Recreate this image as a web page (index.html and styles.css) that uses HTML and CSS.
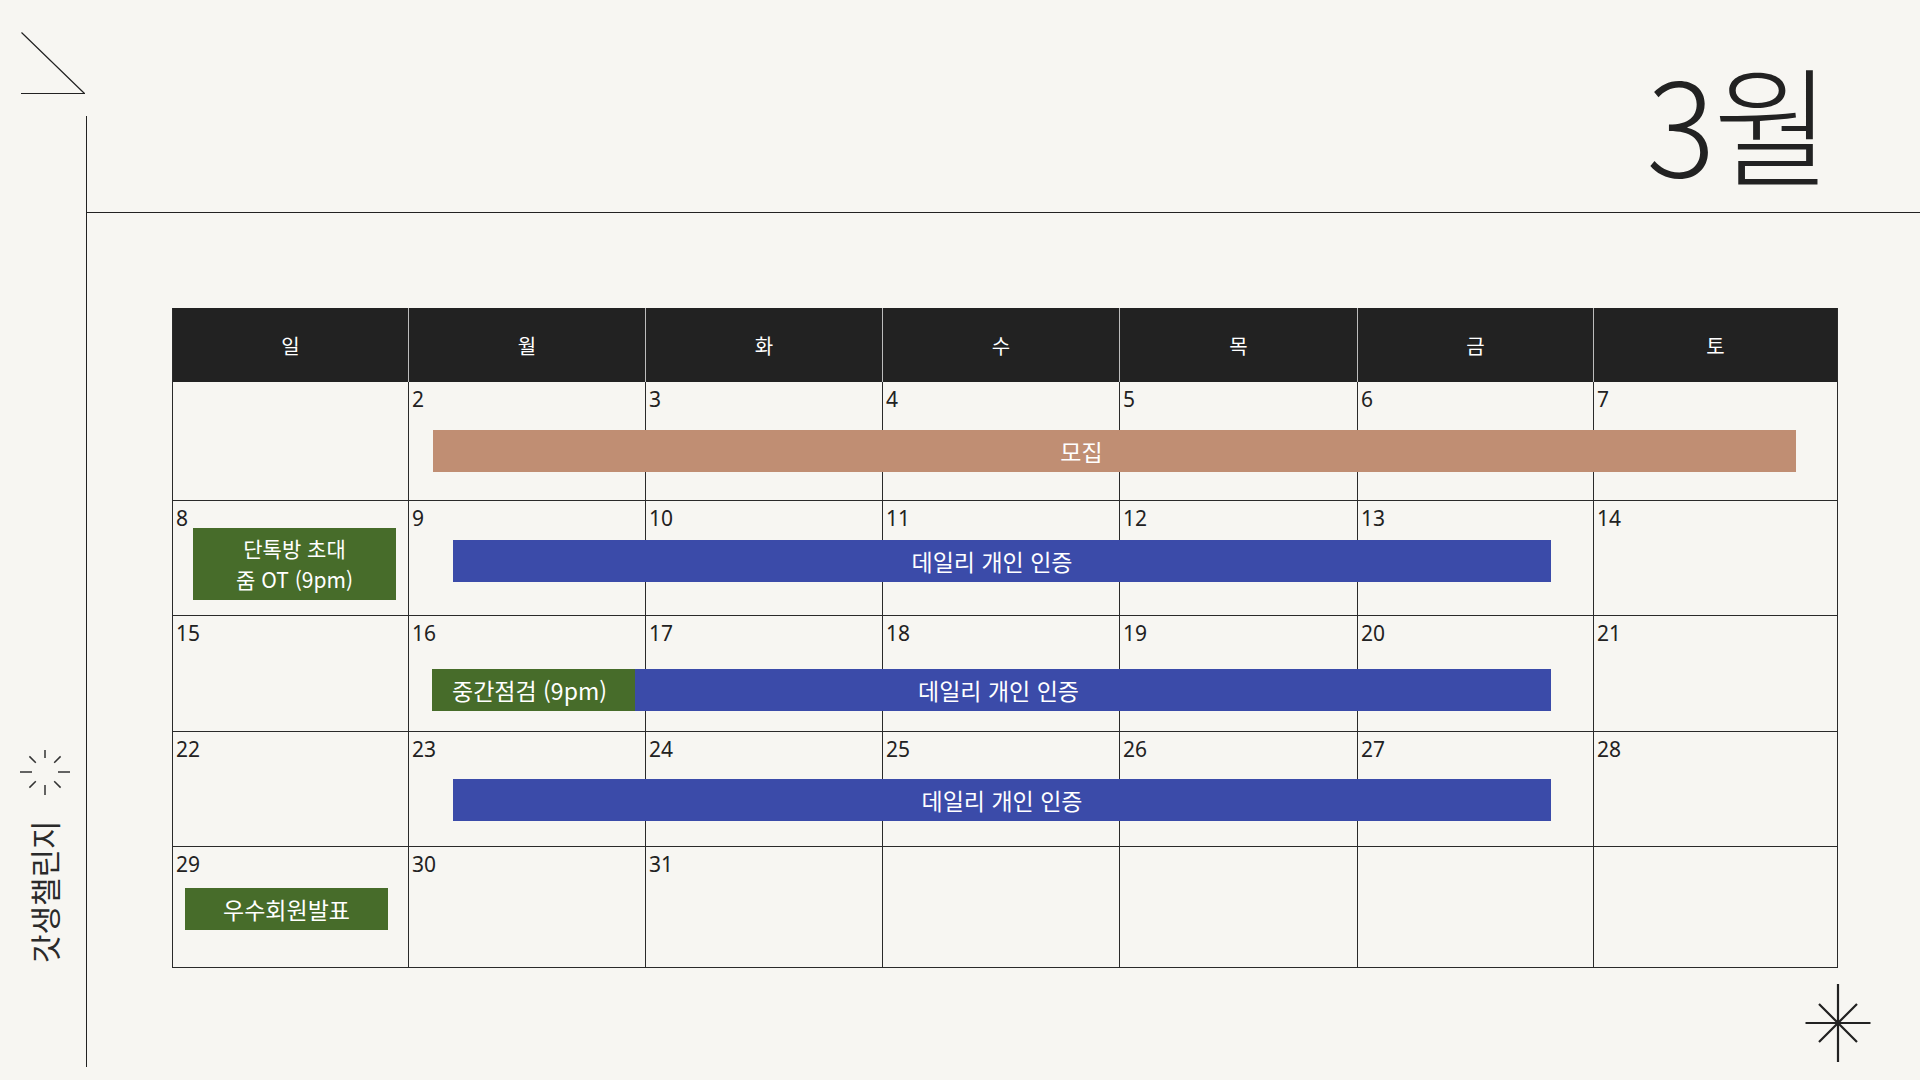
FILE: index.html
```html
<!DOCTYPE html>
<html lang="ko">
<head>
<meta charset="utf-8">
<title>3월 갓생챌린지</title>
<link rel="stylesheet" href="styles.css">
</head>
<body>
<div class="page">
  <aside class="rail">
    <div class="rail-deco">
      <svg class="corner" width="65" height="63" viewBox="0 0 65 63" aria-hidden="true">
        <path d="M0.5 0.5 L63.5 61.5 M0 61.5 H64" stroke="#222" stroke-width="1.2" fill="none"/>
      </svg>
      <svg class="sparkle" width="52" height="52" viewBox="0 0 52 52" aria-hidden="true">
        <g stroke="#333" stroke-width="1.5" stroke-linecap="butt">
          <path d="M26 4V12M26 39V49M1 26H13M39 26H51M10.4 10.4L16.8 16.8M41.6 10.4L35.2 16.8M10.4 41.6L16.8 35.2M35.2 35.2L41.6 41.6"/>
        </g>
      </svg>
      <div class="rail-title">갓생챌린지</div>
    </div>
    <div class="vline"></div>
  </aside>
  <main class="content">
    <header class="title-bar">
      <h1 class="month">3월</h1>
    </header>
    <section class="cal-wrap">
      <div class="calendar">
        <div class="cal-head">
          <div class="dow">일</div>
          <div class="dow">월</div>
          <div class="dow">화</div>
          <div class="dow">수</div>
          <div class="dow">목</div>
          <div class="dow">금</div>
          <div class="dow">토</div>
        </div>
        <div class="week w1">
          <div class="day c1"></div>
          <div class="day c2">2</div>
          <div class="day c3">3</div>
          <div class="day c4">4</div>
          <div class="day c5">5</div>
          <div class="day c6">6</div>
          <div class="day c7">7</div>
          <div class="event tan recruit">모집</div>
        </div>
        <div class="week w2">
          <div class="day c1">8</div>
          <div class="day c2">9</div>
          <div class="day c3">10</div>
          <div class="day c4">11</div>
          <div class="day c5">12</div>
          <div class="day c6">13</div>
          <div class="day c7">14</div>
          <div class="event green ot">
            <span class="ot-line">단톡방 초대</span>
            <span class="ot-line">줌 OT (9pm)</span>
          </div>
          <div class="event blue daily2">데일리 개인 인증</div>
        </div>
        <div class="week w3">
          <div class="day c1">15</div>
          <div class="day c2">16</div>
          <div class="day c3">17</div>
          <div class="day c4">18</div>
          <div class="day c5">19</div>
          <div class="day c6">20</div>
          <div class="day c7">21</div>
          <div class="event blue daily3">
            <span class="seg-green">중간점검 (9pm)</span>
            <span class="seg-text">데일리 개인 인증</span>
          </div>
        </div>
        <div class="week w4">
          <div class="day c1">22</div>
          <div class="day c2">23</div>
          <div class="day c3">24</div>
          <div class="day c4">25</div>
          <div class="day c5">26</div>
          <div class="day c6">27</div>
          <div class="day c7">28</div>
          <div class="event blue daily4">데일리 개인 인증</div>
        </div>
        <div class="week w5">
          <div class="day c1">29</div>
          <div class="day c2">30</div>
          <div class="day c3">31</div>
          <div class="day c4"></div>
          <div class="day c5"></div>
          <div class="day c6"></div>
          <div class="day c7"></div>
          <div class="event green award">우수회원발표</div>
        </div>
      </div>
      <div class="star-row">
        <svg class="star" width="70" height="82" viewBox="0 0 70 82" aria-hidden="true">
          <g stroke="#222" stroke-width="2.2" stroke-linecap="butt">
            <path d="M35 2V80M2.5 41H67.5M16 22L54 60M54 22L16 60"/>
          </g>
        </svg>
      </div>
    </section>
  </main>
</div>
</body>
</html>
```

FILE: styles.css
```css
* { box-sizing: border-box; }

html, body {
  margin: 0;
  padding: 0;
  background: #f7f6f2;
}

body {
  font-family: "Noto Sans", "Noto Sans CJK KR", sans-serif;
  color: #222;
}

.page {
  width: 1920px;
  height: 1080px;
  display: flex;
  overflow: hidden;
  background: #f7f6f2;
}

/* left rail */
.rail {
  display: flex;
  width: 87px;
  flex: none;
}

.rail-deco {
  width: 86px;
  display: flex;
  flex-direction: column;
  align-items: flex-start;
  padding: 32px 0 117px;
}

.corner {
  margin-left: 21px;
  display: block;
}

.sparkle {
  display: block;
  margin-top: auto;
  margin-left: 19px;
}

.rail-title {
  margin-top: 15px;
  margin-left: 28px;
  writing-mode: vertical-rl;
  text-orientation: sideways;
  transform: rotate(180deg);
  font-family: "Noto Sans CJK KR", sans-serif;
  font-size: 31px;
  line-height: 32px;
  height: 150px;
  color: #2a2a2a;
  white-space: nowrap;
}

.vline {
  width: 1px;
  background: #222;
  margin-top: 116px;
  margin-bottom: 13px;
}

/* main */
.content {
  flex: 1;
  display: flex;
  flex-direction: column;
}

.title-bar {
  height: 213px;
  border-bottom: 1px solid #222;
  display: flex;
  justify-content: flex-end;
  align-items: flex-end;
  padding-right: 90px;
  padding-bottom: 27px;
}

.month {
  margin: 0;
  font-family: "Noto Sans CJK KR", sans-serif;
  font-weight: 300;
  font-size: 129px;
  line-height: 1;
  color: #222;
  letter-spacing: -2px;
}

.cal-wrap {
  padding: 95px 0 0 85px;
}

.calendar {
  width: 1666px;
  border: 1px solid #2a2a2a;
  border-top: none;
}

.cal-head,
.week {
  display: grid;
  grid-template-columns: 236px 237px 237px 237px 238px 236px 1fr;
}

.cal-head {
  height: 74px;
  background: #222;
}

.dow {
  display: flex;
  align-items: center;
  justify-content: center;
  color: #fff;
  font-family: "Noto Sans CJK KR", sans-serif;
  font-size: 20px;
  border-right: 1px solid #bdbdbd;
}

.dow:last-child { border-right: none; }

.week {
  border-bottom: 1px solid #2a2a2a;
}
.week:last-child { border-bottom: none; }

.w1 { height: 119px; }
.w2 { height: 115px; }
.w3 { height: 116px; }
.w4 { height: 115px; }
.w5 { height: 120px; }

.day {
  grid-row: 1;
  border-right: 1px solid #2a2a2a;
  font-family: "Noto Sans", sans-serif;
  font-size: 21px;
  line-height: 28px;
  padding: 3px 3px 0;
  color: #222;
}
.c1 { grid-column: 1; }
.c2 { grid-column: 2; }
.c3 { grid-column: 3; }
.c4 { grid-column: 4; }
.c5 { grid-column: 5; }
.c6 { grid-column: 6; }
.c7 { grid-column: 7; border-right: none; }

.event {
  grid-row: 1;
  align-self: start;
  height: 42px;
  color: #fff;
  font-family: "Noto Sans CJK KR", sans-serif;
  font-size: 23px;
  line-height: 42px;
  text-align: center;
  white-space: nowrap;
}

.tan { background: #c08e73; }
.blue { background: #3b4ba9; }
.green { background: #476c2a; }

.recruit {
  grid-column: 2 / 8;
  margin: 48px 41px 0 24px;
  padding-right: 66px;
}

.ot {
  grid-column: 1;
  margin: 27px 0 0 20px;
  width: 203px;
  height: 72px;
  display: flex;
  flex-direction: column;
  align-items: center;
  justify-content: center;
  font-size: 21px;
}

.ot-line {
  display: block;
  line-height: 31px;
}

.daily2 {
  grid-column: 2 / 7;
  margin: 39px 43px 0 44px;
  padding-right: 20px;
}

.daily3 {
  grid-column: 2 / 7;
  margin: 53px 43px 0 23px;
  display: grid;
}

.seg-green,
.seg-text {
  grid-row: 1;
  grid-column: 1;
}

.seg-green {
  justify-self: start;
  width: 203px;
  background: #476c2a;
  padding-right: 8px;
}

.seg-text {
  justify-self: center;
  padding-left: 14px;
}

.daily4 {
  grid-column: 2 / 7;
  margin: 47px 43px 0 44px;
}

.award {
  grid-column: 1;
  margin: 41px 0 0 12px;
  width: 203px;
}

.star-row {
  width: 1666px;
  display: flex;
  justify-content: flex-end;
  margin-top: 14px;
}

.star {
  display: block;
  margin-right: -35px;
}
```
